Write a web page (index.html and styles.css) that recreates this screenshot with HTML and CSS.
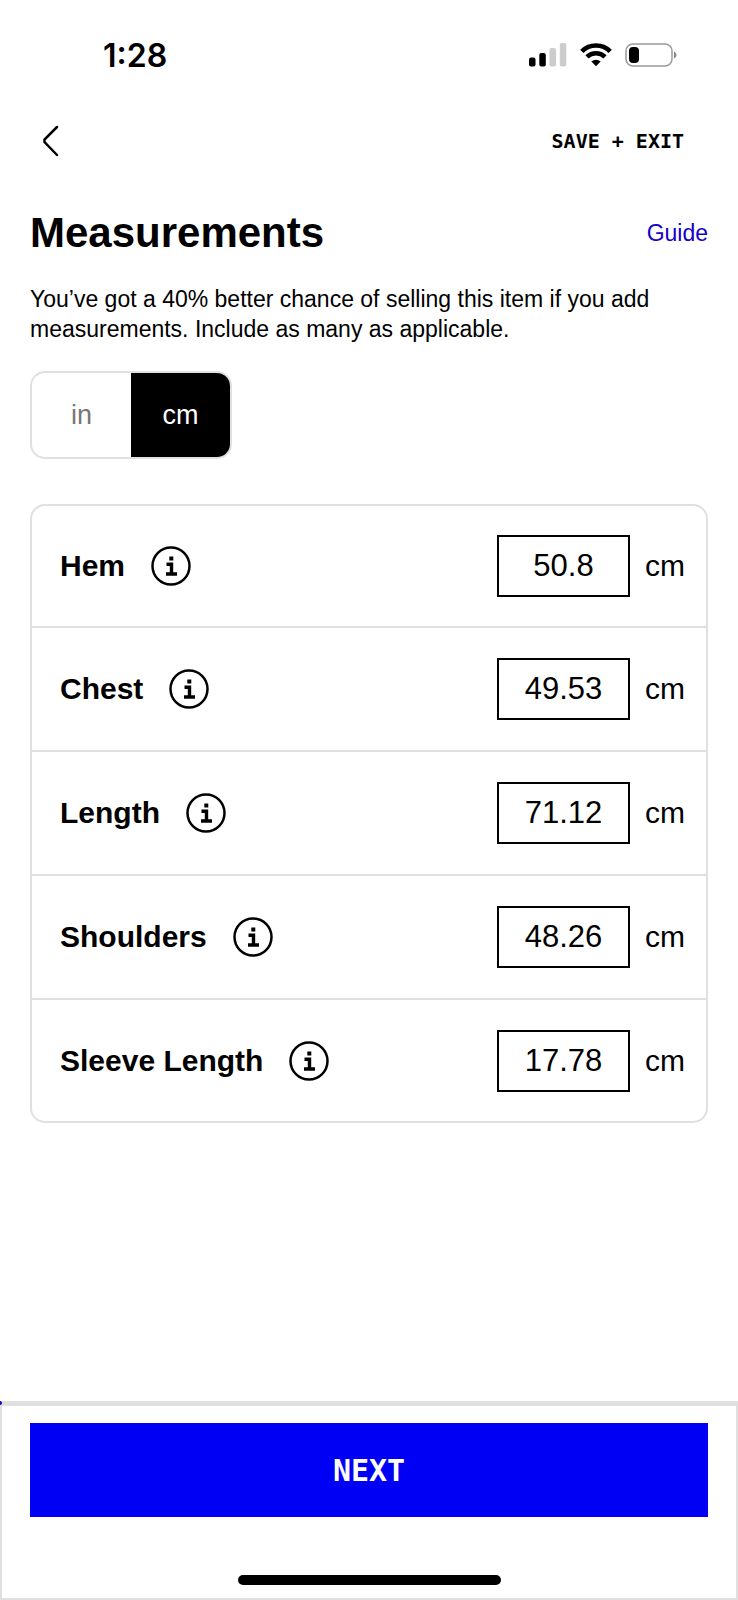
FILE: index.html
```html
<!DOCTYPE html>
<html lang="en">
<head>
    <meta charset="UTF-8">
    <meta name="viewport" content="width=device-width, initial-scale=1.0">
    <title>Measurements</title>
    <link rel="stylesheet" href="styles.css">
</head>
<body>
    <svg class="sprite" aria-hidden="true">
        <symbol id="info" viewBox="0 0 40 40">
            <circle cx="20" cy="20" r="18.500" fill="none" stroke="#000" stroke-width="2.500"/>
            <path d="M18.300 10.500h4v4h-4z" fill="#000"/>
            <path d="M15.500 18.300H20.500V28M15 28H26" fill="none" stroke="#000" stroke-width="3.400"/>
        </symbol>
    </svg>

    <div class="status-bar">
        <span class="time">1:28</span>
        <div class="status-icons">
            <svg width="38" height="24" viewBox="0 0 38 24">
                <rect x="0" y="14.500" width="6.500" height="9" rx="2"/>
                <rect x="10.300" y="10" width="6.500" height="13.500" rx="2"/>
                <rect x="20.500" y="5" width="6.500" height="18.500" rx="2" fill="#ccc"/>
                <rect x="30.800" y="0" width="6.500" height="23.500" rx="2" fill="#ccc"/>
            </svg>
            <svg width="32" height="24" viewBox="0 0 32 24">
                <path d="M1.800 8.300a20.300 20.300 0 0 1 28.400 0M7 13.900a12.800 12.800 0 0 1 18 0" fill="none" stroke="#000" stroke-width="4.600"/>
                <path d="M16 23.300l-4.600-4.700a6.600 6.600 0 0 1 9.200 0z"/>
            </svg>
            <svg width="52" height="24" viewBox="0 0 52 24">
                <rect x="1" y="1" width="46" height="22" rx="7" fill="none" stroke="#9b9b9b" stroke-width="1.500"/>
                <rect x="4" y="4" width="10" height="16" rx="4"/>
                <path d="M49 8.500q2.500 1 2.500 3.500t-2.500 3.500z" fill="#888"/>
            </svg>
        </div>
    </div>

    <div class="nav">
        <button class="back" aria-label="Back">
            <svg width="18" height="32" viewBox="0 0 18 32">
                <path d="M15 2L2.500 14.500V17L15 30" fill="none" stroke="#000" stroke-width="2.500" stroke-linecap="round"/>
            </svg>
        </button>
        <button class="save">SAVE + EXIT</button>
    </div>

    <main>
        <div class="heading">
            <h1>Measurements</h1>
            <a href="#">Guide</a>
        </div>
        <p>You’ve got a 40% better chance of selling this item if you add measurements. Include as many as applicable.</p>

        <div class="units">
            <button aria-pressed="false">in</button>
            <button class="active" aria-pressed="true">cm</button>
        </div>

        <div class="card">
            <div class="row">
                <label for="hem">Hem</label>
                <button class="info" aria-label="About hem"><svg width="40" height="40"><use href="#info"/></svg></button>
                <input id="hem" type="text" inputmode="decimal" value="50.8">
                <span>cm</span>
            </div>
            <div class="row">
                <label for="chest">Chest</label>
                <button class="info" aria-label="About chest"><svg width="40" height="40"><use href="#info"/></svg></button>
                <input id="chest" type="text" inputmode="decimal" value="49.53">
                <span>cm</span>
            </div>
            <div class="row">
                <label for="length">Length</label>
                <button class="info" aria-label="About length"><svg width="40" height="40"><use href="#info"/></svg></button>
                <input id="length" type="text" inputmode="decimal" value="71.12">
                <span>cm</span>
            </div>
            <div class="row">
                <label for="shoulders">Shoulders</label>
                <button class="info" aria-label="About shoulders"><svg width="40" height="40"><use href="#info"/></svg></button>
                <input id="shoulders" type="text" inputmode="decimal" value="48.26">
                <span>cm</span>
            </div>
            <div class="row">
                <label for="sleeve">Sleeve Length</label>
                <button class="info" aria-label="About sleeve length"><svg width="40" height="40"><use href="#info"/></svg></button>
                <input id="sleeve" type="text" inputmode="decimal" value="17.78">
                <span>cm</span>
            </div>
        </div>
    </main>

    <div class="footer">
        <div class="progress"><div class="progress-fill"></div></div>
        <div class="footer-body">
            <button class="next">NEXT</button>
            <div class="home-indicator"></div>
        </div>
    </div>
</body>
</html>
```
FILE: styles.css
```css
* {
    box-sizing: border-box;
}
body {
    margin: 0;
    min-height: 100vh;
    display: flex;
    flex-direction: column;
    font-family: "Liberation Sans", Arial, sans-serif;
    background: #fff;
    color: #000;
}
button {
    padding: 0;
    border: none;
    background: none;
    color: inherit;
    font-family: inherit;
    cursor: pointer;
}
svg {
    display: block;
}
.sprite {
    position: absolute;
    width: 0;
    height: 0;
}
.status-bar {
    display: flex;
    justify-content: space-between;
    align-items: center;
    height: 110px;
    padding: 0 61px 0 103px;
}
.time {
    font-family: Inter, sans-serif;
    font-size: 32px;
    font-weight: 600;
}
.status-icons {
    display: flex;
    gap: 13px;
}
.nav {
    display: flex;
    justify-content: space-between;
    align-items: center;
    height: 62px;
    padding: 0 54px 0 42px;
}
.save, .next {
    font-family: "DejaVu Sans Mono", monospace;
    font-weight: bold;
}
.save {
    font-size: 20px;
}
main {
    padding: 0 30px;
}
.heading {
    display: flex;
    justify-content: space-between;
    align-items: center;
    margin-top: 36px;
}
h1 {
    margin: 0;
    font-size: 42px;
    line-height: 50px;
}
.heading a {
    color: #1400c8;
    font-size: 23px;
    text-decoration: none;
}
p {
    margin: 26px 0 27px;
    font-size: 23px;
    line-height: 30px;
}
.units {
    display: flex;
    width: 202px;
    height: 88px;
    border: 2px solid #e0e0e0;
    border-radius: 15px;
    overflow: hidden;
}
.units button {
    flex: 1;
    color: #777;
    font-size: 27px;
}
.units .active {
    background: #000;
    color: #fff;
}
.card {
    margin-top: 45px;
    border: 2px solid #e0e0e0;
    border-radius: 15px;
}
.row {
    display: flex;
    align-items: center;
    height: 124px;
    padding: 0 21px 0 28px;
    border-bottom: 2px solid #e0e0e0;
    font-size: 30px;
}
.row:first-child {
    height: 122px;
}
.row:last-child {
    height: 121px;
    border-bottom: none;
}
.row label {
    font-weight: bold;
}
.info {
    margin-left: 26px;
}
.row input {
    width: 133px;
    height: 62px;
    margin: 0 15px 0 auto;
    border: 2px solid #000;
    border-radius: 0;
    padding: 0;
    background: #fff;
    color: #000;
    font-family: inherit;
    font-size: 31px;
    text-align: center;
}
.footer {
    margin-top: auto;
}
.progress {
    height: 5px;
    background: #e0e0e0;
}
.progress-fill {
    width: 2px;
    height: 4px;
    border-radius: 0 2px 2px 0;
    background: #1400c8;
}
.footer-body {
    padding: 17px 28px 13px;
    border: 2px solid #e0e0e0;
    border-top: none;
}
.next {
    display: block;
    width: 100%;
    height: 94px;
    background: #0000f5;
    color: #fff;
    font-size: 30px;
}
.home-indicator {
    width: 263px;
    height: 10px;
    margin: 58px auto 0;
    border-radius: 5px;
    background: #000;
}
```
